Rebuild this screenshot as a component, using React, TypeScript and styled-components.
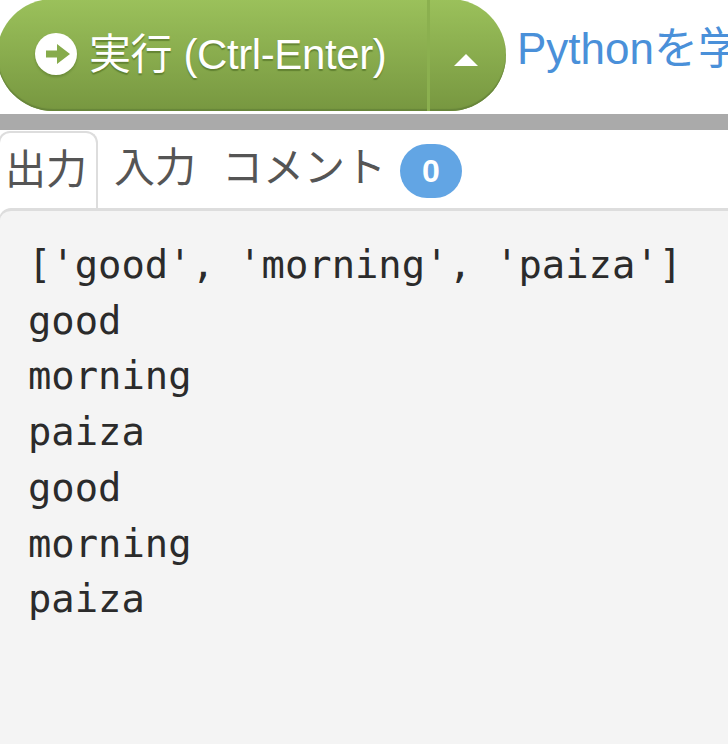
import styled, { createGlobalStyle } from 'styled-components';

const GlobalStyle = createGlobalStyle`
  html, body {
    margin: 0;
    padding: 0;
    background: #fff;
    overflow: hidden;
  }
  body {
    font-family: "Liberation Sans", "Noto Sans CJK JP", sans-serif;
  }
`;

const Page = styled.div`
  width: 728px;
  height: 744px;
  overflow: hidden;
  display: flex;
  flex-direction: column;
`;

const Toolbar = styled.div`
  height: 114px;
  display: flex;
  align-items: flex-start;
  flex-shrink: 0;
  white-space: nowrap;
  overflow: hidden;
`;

const RunGroup = styled.div`
  display: flex;
  height: 112px;
  width: 509px;
  margin-left: -3px;
  margin-top: -1px;
  flex-shrink: 0;
  border-radius: 56px;
  overflow: hidden;
  background: linear-gradient(#9bc15b, #779740);
  box-shadow: inset 0 -2px 1px #67853a;
`;

const RunButton = styled.div`
  width: 433px;
  display: flex;
  align-items: center;
  padding: 0 0 2px 38px;
  box-sizing: border-box;
  gap: 12px;
  border-right: 3px solid #8bb04f;
  color: #fff;
  font-size: 42px;
  letter-spacing: -0.4px;
  text-shadow: 0 2px 1px rgba(70, 100, 30, 0.55);
`;

const RunIcon = styled.svg`
  width: 42px;
  height: 42px;
  flex-shrink: 0;
  filter: drop-shadow(0 2px 1px rgba(70, 100, 30, 0.4));
`;

const RunLabel = styled.span`
  padding-bottom: 7px;
`;

const ToggleButton = styled.div`
  flex: 1;
  display: flex;
  justify-content: center;
  padding: 55px 5px 0 0;
  box-sizing: border-box;
`;

const Caret = styled.div`
  width: 0;
  height: 0;
  border-left: 12px solid transparent;
  border-right: 12px solid transparent;
  border-bottom: 12px solid #fff;
`;

const LearnLink = styled.a`
  margin: 25px 0 0 11px;
  font-size: 44px;
  line-height: 48px;
  color: #4a90d9;
`;

const Divider = styled.div`
  height: 16px;
  flex-shrink: 0;
  background: #aaaaaa;
`;

const TabBar = styled.div`
  height: 77px;
  display: flex;
  flex-shrink: 0;
  align-items: flex-start;
  margin-top: 1px;
`;

const Tab = styled.div<{ $active?: boolean; $gap?: number }>`
  height: 77px;
  box-sizing: border-box;
  padding: 13px 0 0 ${(p) => (p.$active ? '5px' : `${p.$gap}px`)};
  margin-left: ${(p) => (p.$active ? '-2px' : '0')};
  width: ${(p) => (p.$active ? '100px' : 'auto')};
  border: ${(p) => (p.$active ? '2px solid #dddddd' : 'none')};
  border-bottom: none;
  border-radius: ${(p) => (p.$active ? '12px 12px 0 0' : '0')};
  background: #fff;
  color: #555555;
  font-size: 41px;
  line-height: 48px;
  display: flex;
  align-items: flex-start;
`;

const Badge = styled.span`
  width: 62px;
  height: 54px;
  margin: 0 0 0 14px;
  border-radius: 27px;
  background: #62a5e4;
  color: #fff;
  font-size: 32px;
  font-weight: bold;
  line-height: 54px;
  text-align: center;
`;

const Output = styled.pre`
  flex: 1;
  margin: 0;
  padding: 26px 0 0 28px;
  background: #f4f4f4;
  border-top: 3px solid #dddddd;
  border-left: 1px solid #dddddd;
  margin-left: -1px;
  border-radius: 12px 0 0 0;
  font-family: "DejaVu Sans Mono", monospace;
  font-size: 38.8px;
  line-height: 55.7px;
  color: #2b2b2b;
  overflow: hidden;
`;

const lines = ["['good', 'morning', 'paiza']", 'good', 'morning', 'paiza', 'good', 'morning', 'paiza'];

export default function App() {
  return (
    <Page>
      <GlobalStyle />
      <Toolbar>
        <RunGroup>
          <RunButton>
            <RunIcon viewBox="0 0 42 42">
              <circle cx="21" cy="21" r="21" fill="#fff" />
              <path d="M11 17.5h11V11l13 10-13 10v-6.5H11z" fill="#86ab4b" />
            </RunIcon>
            <RunLabel>実行 (Ctrl-Enter)</RunLabel>
          </RunButton>
          <ToggleButton>
            <Caret />
          </ToggleButton>
        </RunGroup>
        <LearnLink>Pythonを学ぶ</LearnLink>
      </Toolbar>
      <Divider />
      <TabBar>
        <Tab $active>出力</Tab>
        <Tab $gap={16}>入力</Tab>
        <Tab $gap={26}>
          コメント
          <Badge>0</Badge>
        </Tab>
      </TabBar>
      <Output>{lines.join('\n')}</Output>
    </Page>
  );
}
